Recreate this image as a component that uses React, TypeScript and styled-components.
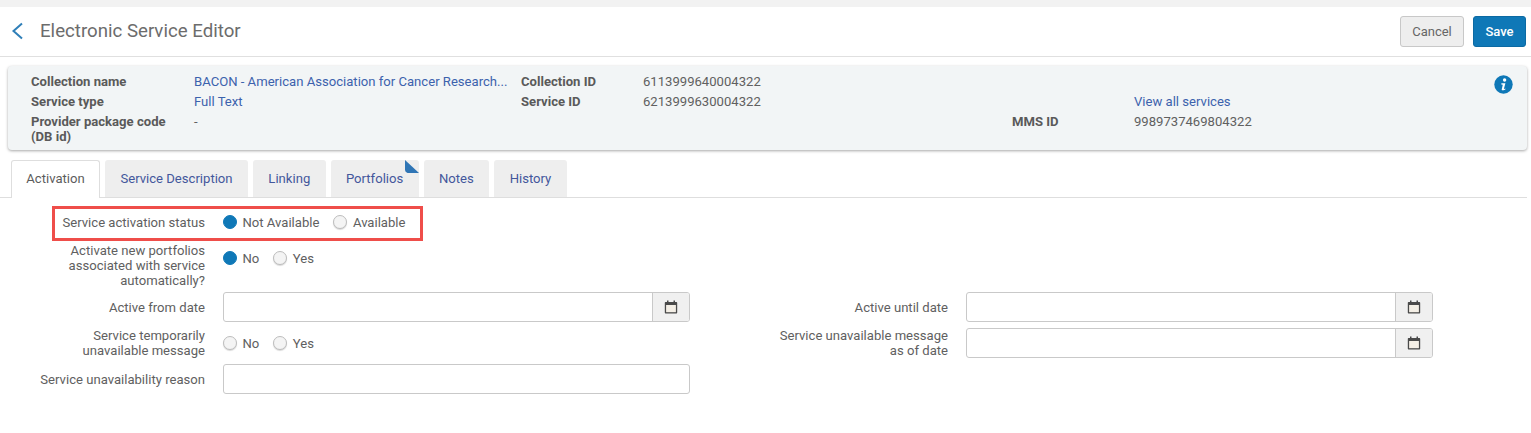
import React from "react";
import styled, { createGlobalStyle } from "styled-components";

const Global = createGlobalStyle`
  html, body { margin: 0; padding: 0; background: #fff; }
  body { font-family: Roboto, "Liberation Sans", sans-serif; font-size: 13.1px; color: #606060; width: 1531px; height: 433px; overflow: hidden; }
  * { box-sizing: border-box; }
`;

const TopStrip = styled.div`height: 7px; background: #f2f2f2;`;

const Header = styled.header`
  height: 50px;
  display: flex;
  align-items: center;
  justify-content: space-between;
  padding: 0 5px 0 11px;
  border-bottom: 1px solid #e0e0e0;
`;
const TitleGroup = styled.div`display: flex; align-items: center; gap: 16px; margin-top: -2px;`;
const Title = styled.h1`margin: 0; font-size: 18.66px; font-weight: 400; color: #6c6c6c; line-height: 24px;`;
const Actions = styled.div`display: flex; gap: 9px; margin-bottom: 1px;`;
const ActionButton = styled.button<{ $primary?: boolean }>`
  height: 31px;
  width: ${p => (p.$primary ? "53px" : "64px")};
  border-radius: 3px;
  font: ${p => (p.$primary ? 500 : 400)} 13px Roboto, sans-serif;
  color: ${p => (p.$primary ? "#fff" : "#666")};
  background: ${p => (p.$primary ? "#0f78b7" : "#eeeeee")};
  border: 1px solid ${p => (p.$primary ? "#0c6aa3" : "#c8c8c8")};
  padding: 0;
`;

const Panel = styled.section`
  position: relative;
  margin: 9px 4px 0 8px;
  height: 84px;
  padding: 6px 23px;
  background: #f2f5f6;
  border-radius: 4px;
  box-shadow: 0 1px 3px rgba(0,0,0,.35);
  display: grid;
  grid-template-columns: 163px 327px 122px 369px 122px 1fr;
  grid-auto-rows: 20px;
  line-height: 20px;
`;
const Key = styled.div<{ $col?: number }>`
  font-weight: 700;
  color: #5a5a5a;
  ${p => p.$col ? `grid-column: ${p.$col};` : ""}
`;
const WrappedKey = styled(Key)`line-height: 15px; padding-top: 2px; height: 34px; width: 150px;`;
const Val = styled.div<{ $col?: number }>`
  white-space: nowrap;
  ${p => p.$col ? `grid-column: ${p.$col};` : ""}
`;
const LinkVal = styled(Val)`color: #3c62ad;`;
const InfoBadge = styled.svg`position: absolute; top: 9px; right: 14px;`;

const TabBar = styled.nav`
  margin: 10px 4px 0 0;
  height: 38px;
  display: flex;
  align-items: flex-end;
  gap: 5px;
  border-bottom: 1px solid #dedede;
  padding-left: 11px;
`;
const Tab = styled.div<{ $active?: boolean; $w: number }>`
  position: relative;
  width: ${p => p.$w}px;
  height: ${p => (p.$active ? "38px" : "37px")};
  margin-bottom: ${p => (p.$active ? "-1px" : "0")};
  padding-bottom: ${p => (p.$active ? "3px" : "0")};
  display: flex;
  align-items: center;
  justify-content: center;
  border-radius: 3px 3px 0 0;
  background: ${p => (p.$active ? "#fff" : "#eeeeee")};
  border: ${p => (p.$active ? "1px solid #dedede" : "none")};
  border-bottom: none;
  color: ${p => (p.$active ? "#5c5c5c" : "#43579c")};
`;
const Corner = styled.svg`position: absolute; top: 0; right: 0;`;

const Form = styled.main`padding-top: 8px;`;
const HighlightRow = styled.div`
  margin-left: 52px;
  width: 371px;
  height: 35px;
  border: 3px solid #ef4e4a;
  display: flex;
  align-items: center;
  gap: 18px;
  padding-bottom: 3px;
`;
const HighlightLabel = styled.label`width: 150px; text-align: right; white-space: nowrap;`;
const Row = styled.div<{ $h: number; $top: number }>`
  display: flex;
  height: ${p => p.$h}px;
  margin-top: ${p => p.$top}px;
`;
const Field = styled.div<{ $labelW: number; $w: number }>`
  width: ${p => p.$w}px;
  display: grid;
  grid-template-columns: ${p => p.$labelW}px 1fr;
  column-gap: 18px;
  align-items: center;
`;
const FieldLabel = styled.label`text-align: right; line-height: 15px;`;
const RadioSet = styled.div`display: flex; align-items: center; gap: 14px;`;
const TopRadios = styled(RadioSet)`align-self: start; margin-top: 6px;`;
const RadioItem = styled.span`display: inline-flex; align-items: center; gap: 5.5px; line-height: 16px;`;
const RadioText = styled.span`padding-top: 2px;`;
const Dot = styled.span<{ $on?: boolean }>`
  width: 14px;
  height: 14px;
  border-radius: 50%;
  background: ${p => (p.$on ? "#0f78b7" : "#f4f4f4")};
  border: 1px solid ${p => (p.$on ? "#0f78b7" : "#bdbdbd")};
  box-shadow: ${p => (p.$on ? "none" : "0 1px 1px rgba(0,0,0,.15)")};
`;
const DateBox = styled.div`
  display: flex;
  height: 30px;
  border: 1px solid #c9c9c9;
  border-radius: 3px;
  background: #fff;
  overflow: hidden;
`;
const DateInput = styled.div`flex: 1;`;
const CalendarButton = styled.div`
  width: 37px;
  padding-right: 1px;
  background: #f0f0f0;
  border-left: 1px solid #c9c9c9;
  display: flex;
  align-items: center;
  justify-content: center;
`;
const TextBox = styled.div`
  height: 30px;
  border: 1px solid #c9c9c9;
  border-radius: 3px;
  background: #fff;
`;

const Radio = ({ on, children }: { on?: boolean; children: React.ReactNode }) => (
  <RadioItem><Dot $on={on} /><RadioText>{children}</RadioText></RadioItem>
);

const CalendarIcon = () => (
  <svg width="14" height="14" viewBox="0 0 14 14" aria-hidden="true">
    <path d="M3 .5h1.5V2h5V.5H11V2h1.2c.6 0 1 .4 1 1v9.5c0 .6-.4 1-1 1H1.8c-.6 0-1-.4-1-1V3c0-.6.4-1 1-1H3z" fill="#4a4a4a" />
    <rect x="2.1" y="5" width="9.8" height="7.2" fill="#f4efe6" />
  </svg>
);

const DateField = () => (
  <DateBox>
    <DateInput />
    <CalendarButton><CalendarIcon /></CalendarButton>
  </DateBox>
);

export default function App() {
  return (
    <>
      <Global />
      <TopStrip />
      <Header>
        <TitleGroup>
          <svg width="13" height="18" viewBox="0 0 13 18" aria-hidden="true">
            <path d="M11 1.5 2.5 9l8.5 7.5" fill="none" stroke="#2f7fb8" strokeWidth="2" />
          </svg>
          <Title>Electronic Service Editor</Title>
        </TitleGroup>
        <Actions>
          <ActionButton>Cancel</ActionButton>
          <ActionButton $primary>Save</ActionButton>
        </Actions>
      </Header>

      <Panel>
        <Key>Collection name</Key>
        <LinkVal>BACON - American Association for Cancer Research...</LinkVal>
        <Key>Collection ID</Key>
        <Val>6113999640004322</Val>
        <Key $col={1}>Service type</Key>
        <LinkVal>Full Text</LinkVal>
        <Key>Service ID</Key>
        <Val>6213999630004322</Val>
        <LinkVal $col={6}>View all services</LinkVal>
        <WrappedKey $col={1}>Provider package code (DB id)</WrappedKey>
        <Val>-</Val>
        <Key $col={5}>MMS ID</Key>
        <Val>9989737469804322</Val>
        <InfoBadge width="19" height="19" viewBox="0 0 19 19" aria-hidden="true">
          <circle cx="9.5" cy="9.5" r="9.2" fill="#0f78b7" />
          <circle cx="10.6" cy="5" r="1.7" fill="#fff" />
          <path d="M7.4 8.2h4l-1.5 5.6c0 .4.5.4 1.4-.2l.2.6c-1.2 1.2-3.8 1.8-3.8.2l1.1-4.7-1.5-.3z" fill="#fff" />
        </InfoBadge>
      </Panel>

      <TabBar>
        <Tab $active $w={89}>Activation</Tab>
        <Tab $w={143}>Service Description</Tab>
        <Tab $w={72.6}>Linking</Tab>
        <Tab $w={88}>
          Portfolios
          <Corner width="14" height="13" viewBox="0 0 14 13" aria-hidden="true">
            <path d="M0 0 14 13H2.5Q0 12 0 10z" fill="#2f75b5" />
          </Corner>
        </Tab>
        <Tab $w={65.4}>Notes</Tab>
        <Tab $w={73}>History</Tab>
      </TabBar>

      <Form>
        <HighlightRow>
          <HighlightLabel>Service activation status</HighlightLabel>
          <RadioSet>
            <Radio on>Not Available</Radio>
            <Radio>Available</Radio>
          </RadioSet>
        </HighlightRow>

        <Row $h={45} $top={2}>
          <Field $labelW={205} $w={690}>
            <FieldLabel>Activate new portfolios<br />associated with service<br />automatically?</FieldLabel>
            <TopRadios>
              <Radio on>No</Radio>
              <Radio>Yes</Radio>
            </TopRadios>
          </Field>
        </Row>

        <Row $h={30} $top={4}>
          <Field $labelW={205} $w={690}>
            <FieldLabel>Active from date</FieldLabel>
            <DateField />
          </Field>
          <Field $labelW={258} $w={743}>
            <FieldLabel>Active until date</FieldLabel>
            <DateField />
          </Field>
        </Row>

        <Row $h={30} $top={6}>
          <Field $labelW={205} $w={690}>
            <FieldLabel>Service temporarily<br />unavailable message</FieldLabel>
            <RadioSet>
              <Radio>No</Radio>
              <Radio>Yes</Radio>
            </RadioSet>
          </Field>
          <Field $labelW={258} $w={743}>
            <FieldLabel>Service unavailable message<br />as of date</FieldLabel>
            <DateField />
          </Field>
        </Row>

        <Row $h={30} $top={6}>
          <Field $labelW={205} $w={690}>
            <FieldLabel>Service unavailability reason</FieldLabel>
            <TextBox />
          </Field>
        </Row>
      </Form>
    </>
  );
}
